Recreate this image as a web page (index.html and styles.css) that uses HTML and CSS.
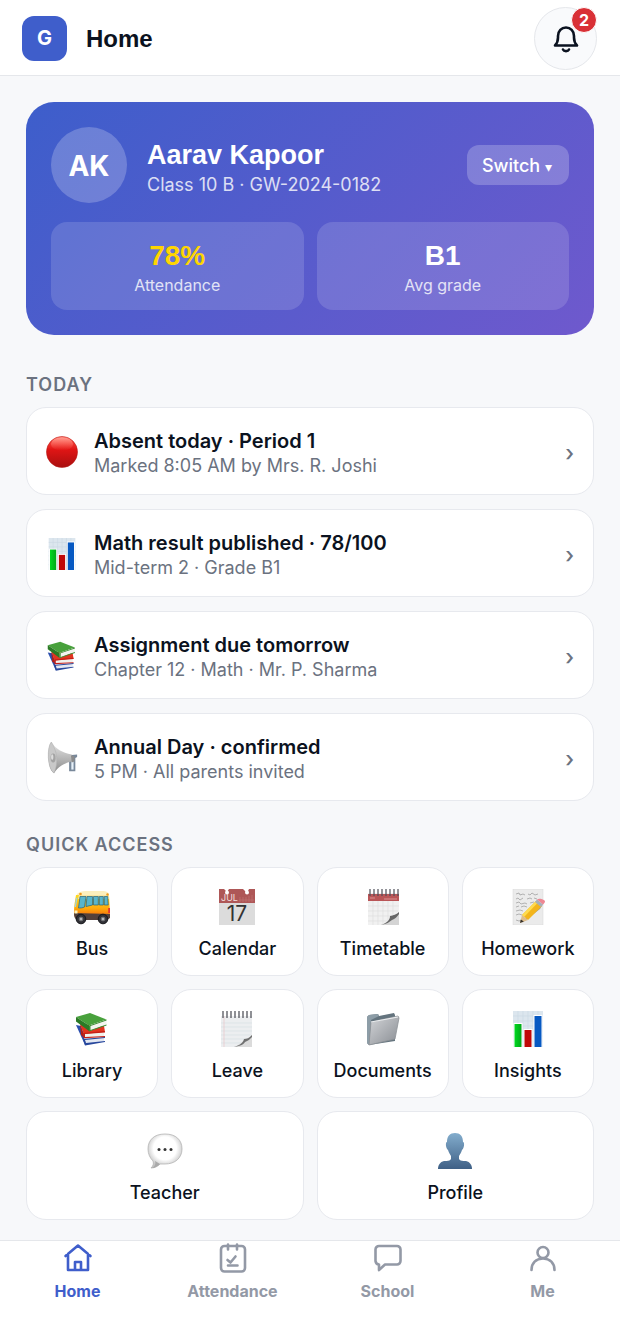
FILE: index.html
```
<!DOCTYPE html>
<html lang="en">
<head>
  <meta charset="UTF-8">
  <meta name="viewport" content="width=device-width, initial-scale=1">
  <title>Home</title>
  <link rel="stylesheet" href="styles.css">
</head>
<body>
  <!-- shared icons -->
  <svg class="sprite" aria-hidden="true">
    <defs>
      <linearGradient id="gRed" x1="0" y1="0" x2="0" y2="1"><stop offset="0" stop-color="#ff5a4e"/><stop offset=".42" stop-color="#e01515"/><stop offset="1" stop-color="#a90f0f"/></linearGradient>
      <linearGradient id="gShine" x1="0" y1="0" x2="0" y2="1"><stop offset="0" stop-color="#ff9d92"/><stop offset="1" stop-color="#ff5c50" stop-opacity="0"/></linearGradient>
      <linearGradient id="gGreen" x1="0" y1="0" x2="1" y2="0"><stop offset="0" stop-color="#00d820"/><stop offset="1" stop-color="#00a818"/></linearGradient>
      <linearGradient id="gHorn" x1="0" y1="0" x2="0" y2="1"><stop offset="0" stop-color="#e6e6e6"/><stop offset=".55" stop-color="#b5b5b5"/><stop offset="1" stop-color="#888"/></linearGradient>
      <linearGradient id="gBus" x1="0" y1="0" x2="0" y2="1"><stop offset="0" stop-color="#ffdc1e"/><stop offset=".55" stop-color="#ffab0c"/><stop offset="1" stop-color="#ef5a0c"/></linearGradient>
      <linearGradient id="gFolder" x1="0" y1="0" x2="1" y2="1"><stop offset="0" stop-color="#d3d5d8"/><stop offset="1" stop-color="#898d93"/></linearGradient>
      <linearGradient id="gUser" x1="0" y1="0" x2="0" y2="1"><stop offset="0" stop-color="#83adcd"/><stop offset="1" stop-color="#3f6086"/></linearGradient>
      <radialGradient id="gBubble" cx=".5" cy=".42" r=".56"><stop offset=".6" stop-color="#fff"/><stop offset="1" stop-color="#c4c4c4"/></radialGradient>
    </defs>
    <symbol id="i-circle" viewBox="0 0 36 36">
      <circle cx="18" cy="18" r="17.500" fill="url(#gRed)" stroke="#b51a16" stroke-width=".6"/>
      <ellipse cx="18" cy="9" rx="12.500" ry="7.500" fill="url(#gShine)"/>
    </symbol>
    <symbol id="i-chart" viewBox="0 0 36 36">
      <path d="M3 0h30v36H3z" fill="#dce6ee"/>
      <path d="M3 5h30M3 10h30M3 15h30M3 20h30M3 25h30M3 30h30M8 0v36M13 0v36M18 0v36M23 0v36M28 0v36" stroke="#cbd8e2" stroke-width=".6"/>
      <path d="M3.500 12h9v24h-9zM13.500 18h9v18h-9zM23.500 4h9v32h-9z" fill="#fff"/>
      <path d="M4.500 13h7v23h-7z" fill="url(#gGreen)"/>
      <path d="M14.500 19h7v17h-7z" fill="#c00808"/>
      <path d="M24.500 5h7v31h-7z" fill="#0759c2"/>
    </symbol>
    <symbol id="i-books" viewBox="0 0 36 36">
      <path d="M2 14l5 1 5 14-1 5z" fill="#2b4fae"/>
      <path d="M10 27l20-1v4l-18 3z" fill="#e3e8f2"/>
      <path d="M9 28l22-2v1L11 29l1 3 19-2v1l-20 3.500z" fill="#27479c"/>
      <path d="M6 13l24 2 1 6-21 3z" fill="#e2331f"/>
      <path d="M6 13l3 9 1 5-3-3z" fill="#b51c12"/>
      <path d="M10 23l20-2v4l-19 1z" fill="#f1f1ec"/>
      <path d="M9 22l22-2v1.500L11 23v3l20-1v1l-21 1.200z" fill="#c51f16"/>
      <path d="M2 6l14-4 16.500 6.500L15 14.500z" fill="#48a13c"/>
      <path d="M2 6l13 8.500V20L2 10.500z" fill="#2b7a25"/>
      <path d="M15 14.500l17.500-6v5L15.500 20z" fill="#f4f4f0"/>
      <path d="M15 14.500l17.500-6v1L16.500 15v4l16-5.500v1L15 20.500z" fill="#388c2f"/>
    </symbol>
    <symbol id="i-horn" viewBox="0 0 36 36">
      <path d="M26 15l9-1v3l-2 1v15h-7V21h-2z" fill="#78889a"/>
      <path d="M28.500 20H31v11h-2.500z" fill="#e7f1f9"/>
      <path d="M6 0c5 8 12 12 23 14l1 8c-8 1-16 5-21 13-8-5-8-30-3-35z" fill="url(#gHorn)"/>
      <path d="M6 0c7 11 8 24 3 35C1 30 1 5 6 0z" fill="#c9c9c9" stroke="#b0b0b0" stroke-width=".6"/>
      <ellipse cx="8" cy="18" rx="2.800" ry="5" fill="#a3a3a3"/>
      <ellipse cx="7" cy="17" rx="1.300" ry="3.200" fill="#ddd"/>
      <path d="M28 15l4 1v6l-3 1z" fill="#8b8b8b"/>
    </symbol>
    <symbol id="i-bus" viewBox="0 0 36 36">
      <path d="M3 5c2-2 5-3 9-3h16c4 0 7 1 7 4v3H2z" fill="#fcefbd"/>
      <path d="M2 6h33l1 18c0 3-1 5-3 6H3c-2-1-3-3-3-7 0-6 1-11 2-17z" fill="url(#gBus)"/>
      <path d="M5 6h30v4H4z" fill="#fae6a0"/>
      <path d="M6 7.500h6L10.500 18c-2 1-4 1-6 1zM13 7.500h5.500V16L12 17.500zM19.500 7.500h4.800V16h-4.800zM25.300 7.500h4V16h-4zM30.300 7.500h3.400l.5 8.500h-3.900z" fill="#58b5cb" stroke="#286377" stroke-width=".7"/>
      <path d="M2 9l1.500-.5L2 18H.7z" fill="#9bd6dd"/>
      <circle cx="6.500" cy="5" r="1.300" fill="#ee981c"/><circle cx="33.500" cy="5.500" r="1.200" fill="#ee981c"/>
      <path d="M0 24l36 1v4l-3 2H3c-2-1-3-3-3-7z" fill="#53403b"/>
      <path d="M.5 21.500h3v3h-3z" fill="#fff4ba"/><path d="M34.200 19H36v5h-1.800z" fill="#e23535"/>
      <g fill="#303036" stroke="#17171b"><circle cx="7" cy="30" r="4.800"/><circle cx="29" cy="30" r="4.800"/></g>
      <g fill="#b5b7ba" stroke="#6c6d70"><circle cx="7" cy="30" r="1.900"/><circle cx="29" cy="30" r="1.900"/></g>
    </symbol>
    <symbol id="i-timetable" viewBox="0 0 36 36">
      <path d="M3 4h31v21L21 36H3z" fill="#f1f1f1"/>
      <path d="M3 5h31v7H3z" fill="#b95557"/>
      <path d="M3 17h31M3 22h30M3 27h25M3 32h22M8 12v24M13 12v24M18 12v24M23 12v19M28 12v16" stroke="#dedede" stroke-width=".7"/>
      <path d="M5 9h5M19 10h13" stroke="#df9999" stroke-width=".9"/>
      <path d="M34 23v13H16c8-2 9-6 11-9 2-1 5-2 7-4z" fill="#d4d4d4"/>
      <path d="M34 23c-3 3-5 3-9 4 0 4-3 7-9 9 6-1 8-3 11-5 3-1 5-3 7-6z" fill="#666"/>
      <path d="M5 0v7M9 0v7M13 0v7M17 0v7M21 0v7M25 0v7M29 0v7M33 0v7" stroke="#4e4f58" stroke-width="1.200"/>
    </symbol>
    <symbol id="i-memo" viewBox="0 0 36 36">
      <path d="M3 0h30v36H3z" fill="#ebebeb" stroke="#d5d5d5" stroke-width=".5"/>
      <path d="M6 5l3-1 1 2 3-1 2 1M18 5l2 1 2-2 3 2 3-1M6 10l2-1 2 2 3-2M17 10l3-1 2 1M24 9l3 1M6 14l3-1 2 2 4-1 2 1M20 14l4-1M6 18l3-1M11 18l3-1 3 1M6 22l4-1 3 1M6 26l3-1 3 1M6 31l3 1 3-1" stroke="#8a8a8a" stroke-width=".6" fill="none"/>
      <path d="M12 34l18-14 3-5-9 5z" fill="#999"/>
      <path d="M12 26L26 12l6 5-14 14z" fill="#f3b51c"/>
      <path d="M12 26L26 12l2 1.500L14 28z" fill="#ffdb4e"/>
      <path d="M12 26l6 5-8 3z" fill="#dfbd8b"/><path d="M10 34l.8-3.500 3 2z" fill="#34302a"/>
      <path d="M25 13l2-2.500 6 5-2 2.500z" fill="#a6b0ba"/>
      <path d="M27 10.500c2-2 8 0 8 2 0 1-1 2-2 3z" fill="#ee8793"/>
    </symbol>
    <symbol id="i-notepad" viewBox="0 0 36 36">
      <path d="M2 5h31v21L22 36H2z" fill="#eceef0"/>
      <path d="M2 12h31M2 16h31M2 20h31M2 24h30M2 28h26M2 32h20" stroke="#d9dfe4" stroke-width=".7"/>
      <path d="M5 5v31" stroke="#ebc6c9" stroke-width=".7"/>
      <path d="M33 24v12H15c7-3 9-6 11-8 2 0 5-2 7-4z" fill="#dbdbdb"/>
      <path d="M33 24c-3 3-5 4-8 4-1 4-4 6-10 8 7-1 10-3 11-5 3-1 5-3 7-5z" fill="#707070"/>
      <path d="M4 0v7M8 0v7M12 0v7M16 0v7M20 0v7M24 0v7M28 0v7M32 0v7" stroke="#55565e" stroke-width="1.300"/>
    </symbol>
    <symbol id="i-folder" viewBox="0 0 36 36">
      <path d="M2 6l2-2 9-1 1 2 15-3 1 2v26L4 34l-2-2z" fill="#64747e"/>
      <path d="M2 6l2-2 9-1 1 2-8 4-2 25-2-2z" fill="#8d9da7"/>
      <path d="M6 11l27-6 1 2-4 21-26 6z" fill="url(#gFolder)" stroke="#8d9297" stroke-width=".8"/>
      <path d="M6 11l27-5" stroke="#eceef0" stroke-width="1.200"/>
    </symbol>
    <symbol id="i-bubble" viewBox="0 0 36 36">
      <path d="M18 1c11 0 17 6 17 15s-7 15-17 15h-5c-2 2-5 4-9 4 2-2 3-4 2-7-3-3-5-7-5-12C1 7 7 1 18 1z" fill="url(#gBubble)" stroke="#b4b4b4" stroke-width=".8"/>
      <path d="M5 35c3-2 4-4 3-7l5 3c-2 2-5 4-8 4z" fill="#aaa"/>
      <g fill="#333"><circle cx="12" cy="16.500" r="1.500"/><circle cx="18" cy="16.500" r="1.500"/><circle cx="24" cy="16.500" r="1.500"/></g>
    </symbol>
    <symbol id="i-user" viewBox="0 0 36 36">
      <path d="M18 0c5 0 8 3 8 9 2 0 1 7-1 8-1 3-2 4-3 6v3c1 2 4 2 7 2 4 1 6 4 6 8H1c0-4 2-7 6-8 3 0 6 0 7-2v-3c-1-2-2-3-3-6-2-1-3-8-1-8 0-6 3-9 8-9z" fill="url(#gUser)"/>
    </symbol>
  </svg>

  <header class="topbar">
    <div class="logo">G</div>
    <h1 class="page-title">Home</h1>
    <button class="bell" type="button" aria-label="Notifications">
      <svg class="bell-icon" viewBox="0 0 26 28"><path d="M2 20.500c2-2 3-4 3-8V11c0-5 3.500-8.500 8-8.500S21 6 21 11v1.500c0 4 1 6 3 8z"/><path d="M10 24.500c1 2.200 5 2.200 6 0"/></svg>
      <span class="badge">2</span>
    </button>
  </header>

  <main class="content">
    <section class="hero">
      <div class="hero-top">
        <div class="avatar">AK</div>
        <div class="student">
          <h2 class="student-name">Aarav Kapoor</h2>
          <p class="student-class">Class 10 B · GW-2024-0182</p>
        </div>
        <button class="switch" type="button">Switch <span class="caret">▾</span></button>
      </div>
      <div class="stats">
        <div class="stat">
          <div class="stat-value gold">78%</div>
          <div class="stat-label">Attendance</div>
        </div>
        <div class="stat">
          <div class="stat-value">B1</div>
          <div class="stat-label">Avg grade</div>
        </div>
      </div>
    </section>

    <h3 class="section-title">TODAY</h3>
    <div class="feed">
      <a class="feed-item" href="#">
        <svg class="feed-icon"><use href="#i-circle"/></svg>
        <span class="feed-text"><span class="feed-title">Absent today · Period 1</span><span class="feed-sub">Marked 8:05 AM by Mrs. R. Joshi</span></span>
        <span class="chevron">›</span>
      </a>
      <a class="feed-item" href="#">
        <svg class="feed-icon"><use href="#i-chart"/></svg>
        <span class="feed-text"><span class="feed-title">Math result published · 78/100</span><span class="feed-sub">Mid-term 2 · Grade B1</span></span>
        <span class="chevron">›</span>
      </a>
      <a class="feed-item" href="#">
        <svg class="feed-icon"><use href="#i-books"/></svg>
        <span class="feed-text"><span class="feed-title">Assignment due tomorrow</span><span class="feed-sub">Chapter 12 · Math · Mr. P. Sharma</span></span>
        <span class="chevron">›</span>
      </a>
      <a class="feed-item" href="#">
        <svg class="feed-icon"><use href="#i-horn"/></svg>
        <span class="feed-text"><span class="feed-title">Annual Day · confirmed</span><span class="feed-sub">5 PM · All parents invited</span></span>
        <span class="chevron">›</span>
      </a>
    </div>

    <h3 class="section-title">QUICK ACCESS</h3>
    <div class="tiles">
      <a class="tile" href="#"><svg class="tile-icon"><use href="#i-bus"/></svg>Bus</a>
      <a class="tile" href="#">
        <svg class="tile-icon" viewBox="0 0 36 36">
          <path d="M0 0h36v36H0z" fill="#dcdcdc"/>
          <path d="M0 0h36v14H0z" fill="#ae5757"/>
          <path d="M8 3L5 0h5zM28 4l-4-4h6z" fill="#fff"/>
          <circle cx="8" cy="3.500" r="2" fill="#fff"/><circle cx="28" cy="3.500" r="2" fill="#fff"/>
          <path d="M20 11h15M21 8v5M24 8v5M27 8v5M30 7v6M33 6v7" stroke="#c07474" stroke-width=".7"/>
          <text class="cal-month" x="2" y="12">JUL</text>
          <text class="cal-day" x="18" y="32">17</text>
        </svg>
        Calendar
      </a>
      <a class="tile" href="#"><svg class="tile-icon"><use href="#i-timetable"/></svg>Timetable</a>
      <a class="tile" href="#"><svg class="tile-icon"><use href="#i-memo"/></svg>Homework</a>
      <a class="tile" href="#"><svg class="tile-icon"><use href="#i-books"/></svg>Library</a>
      <a class="tile" href="#"><svg class="tile-icon"><use href="#i-notepad"/></svg>Leave</a>
      <a class="tile" href="#"><svg class="tile-icon"><use href="#i-folder"/></svg>Documents</a>
      <a class="tile" href="#"><svg class="tile-icon"><use href="#i-chart"/></svg>Insights</a>
      <a class="tile wide" href="#"><svg class="tile-icon"><use href="#i-bubble"/></svg>Teacher</a>
      <a class="tile wide" href="#"><svg class="tile-icon"><use href="#i-user"/></svg>Profile</a>
    </div>
  </main>

  <nav class="tabbar">
    <a class="tab active" href="#">
      <svg class="tab-icon" viewBox="0 0 32 32"><path d="M3.500 14L16 3.500 28.500 14M6 12v16h20V12M13 28v-8h6v8"/></svg>
      Home
    </a>
    <a class="tab" href="#">
      <svg class="tab-icon" viewBox="0 0 32 32"><rect x="4" y="4" width="24" height="25.500" rx="3.500"/><path d="M11 2.500v5M20 2.500v5M10.500 18l3 2.500 5-6M11 23.500h9.500"/></svg>
      Attendance
    </a>
    <a class="tab" href="#">
      <svg class="tab-icon" viewBox="0 0 32 32"><path d="M7 4h18a3.500 3.500 0 0 1 3.500 3.500V19a3.500 3.500 0 0 1-3.500 3.500H13L7 28v-5.500a4 4 0 0 1-3.500-3.500V7.500A3.500 3.500 0 0 1 7 4z"/></svg>
      School
    </a>
    <a class="tab" href="#">
      <svg class="tab-icon" viewBox="0 0 32 32"><circle cx="16" cy="10.500" r="5.500"/><path d="M4.500 28c0-7 4.500-11.500 11.500-11.500S27.500 21 27.500 28"/></svg>
      Me
    </a>
  </nav>
</body>
</html>
```
FILE: styles.css
```
* {
  box-sizing: border-box;
}
body {
  margin: 0;
  min-height: 100vh;
  display: flex;
  flex-direction: column;
  background: #f7f8fa;
  color: #0b1220;
  font-family: Inter, "Liberation Sans", sans-serif;
  font-size: 18px;
}
h1, h2, h3, p {
  margin: 0;
}
a {
  color: inherit;
  text-decoration: none;
}
button {
  font: inherit;
  border: none;
  cursor: pointer;
}
.sprite {
  position: absolute;
  width: 0;
  height: 0;
}

/* top bar */
.topbar {
  display: flex;
  align-items: center;
  gap: 19px;
  height: 76px;
  padding: 2px 23px 0 22px;
  background: #fff;
  border-bottom: 1px solid #e5e7eb;
}
.logo {
  width: 45px;
  height: 45px;
  border-radius: 12px;
  background: #3f5ecb;
  color: #fff;
  font-size: 20px;
  font-weight: 700;
  line-height: 45px;
  text-align: center;
}
.page-title {
  font-size: 24px;
  font-weight: 700;
  font-family: "Liberation Sans", sans-serif;
}
.bell {
  position: relative;
  display: flex;
  align-items: center;
  justify-content: center;
  width: 63px;
  height: 63px;
  margin-left: auto;
  padding: 0;
  border: 1px solid #e5e7eb;
  border-radius: 50%;
  background: #f9fafc;
}
.bell-icon {
  width: 26px;
  height: 28px;
  fill: none;
  stroke: #0b1220;
  stroke-width: 2.6;
  stroke-linejoin: round;
  stroke-linecap: round;
}
.badge {
  position: absolute;
  top: -1px;
  right: -1px;
  min-width: 26px;
  height: 26px;
  border: 1px solid #fff;
  border-radius: 13px;
  background: #d93036;
  color: #fff;
  font-size: 16px;
  font-weight: 700;
  line-height: 24px;
  text-align: center;
}

.content {
  flex: 1;
  padding: 26px 26px 20px;
}

/* student card */
.hero {
  margin-bottom: 38px;
  padding: 25px;
  border-radius: 28px;
  background: linear-gradient(135deg, #3d5ecb 0%, #6f59cd 100%);
  color: #fff;
}
.hero-top {
  display: flex;
  align-items: center;
  gap: 20px;
  margin-bottom: 19px;
}
.avatar {
  width: 76px;
  height: 76px;
  border-radius: 50%;
  background: rgba(255, 255, 255, 0.22);
  font-size: 28px;
  font-weight: 700;
  line-height: 78px;
  text-align: center;
}
.student {
  flex: 1;
  padding-top: 4px;
}
.student-name {
  font-family: "Liberation Sans", sans-serif;
  font-size: 27px;
  line-height: 36px;
}
.student-class {
  font-size: 18px;
  line-height: 24px;
  opacity: 0.8;
}
.switch {
  height: 40px;
  padding: 0 17px 0 15px;
  border-radius: 12px;
  background: rgba(255, 255, 255, 0.22);
  color: #fff;
  font-size: 18px;
  font-weight: 500;
}
.caret {
  font-size: 14px;
}
.stats {
  display: grid;
  grid-template-columns: 1fr 1fr;
  gap: 13px;
}
.stat {
  padding: 16px 0 14px;
  border-radius: 16px;
  background: rgba(255, 255, 255, 0.14);
  text-align: center;
}
.stat-value {
  font-family: "Liberation Sans", sans-serif;
  font-size: 28px;
  font-weight: 700;
  line-height: 36px;
}
.gold {
  color: #ffd500;
}
.stat-label {
  font-size: 16px;
  line-height: 22px;
  opacity: 0.8;
}

/* lists */
.section-title {
  margin-bottom: 10px;
  color: #6b7280;
  font-size: 18px;
  font-weight: 600;
  line-height: 24px;
  letter-spacing: 1px;
}
.feed {
  display: flex;
  flex-direction: column;
  gap: 14px;
  margin-bottom: 32px;
}
.feed-item {
  display: flex;
  align-items: center;
  gap: 16px;
  padding: 20px 19px 16px;
  border: 1px solid #e7e9ee;
  border-radius: 20px;
  background: #fff;
}
.feed-icon {
  width: 32px;
  height: 32px;
  margin-bottom: 3px;
}
.feed-text {
  flex: 1;
  display: flex;
  flex-direction: column;
}
.feed-title {
  font-size: 20px;
  font-weight: 600;
  line-height: 26px;
}
.feed-sub {
  color: #6b7280;
  font-size: 18px;
  line-height: 24px;
}
.chevron {
  color: #6b7280;
  font-size: 22px;
  font-weight: 500;
  line-height: 24px;
}

/* quick access */
.tiles {
  display: grid;
  grid-template-columns: repeat(4, 1fr);
  gap: 13px;
}
.tile {
  display: flex;
  flex-direction: column;
  align-items: center;
  gap: 12px;
  padding: 21px 0 14px;
  border: 1px solid #e7e9ee;
  border-radius: 20px;
  background: #fff;
  font-size: 18px;
  font-weight: 500;
  line-height: 24px;
}
.wide {
  grid-column: span 2;
}
.tile-icon {
  width: 36px;
  height: 36px;
}
.cal-month {
  font-size: 9px;
  font-weight: 400;
  fill: #f3dede;
}
.cal-day {
  font-size: 21px;
  font-weight: 400;
  text-anchor: middle;
  fill: #333;
}

/* bottom tabs */
.tabbar {
  position: sticky;
  bottom: 0;
  display: grid;
  grid-template-columns: repeat(4, 1fr);
  padding: 1px 0 40px;
  border-top: 1px solid #e5e7eb;
  background: #fff;
}
.tab {
  display: flex;
  flex-direction: column;
  align-items: center;
  gap: 7px;
  color: #9399a6;
  font-size: 16px;
  font-weight: 700;
  line-height: 20px;
}
.tab.active {
  color: #3f5ecb;
}
.tab-icon {
  width: 32px;
  height: 32px;
  fill: none;
  stroke: currentColor;
  stroke-width: 2.6;
  stroke-linecap: round;
  stroke-linejoin: round;
}
```
